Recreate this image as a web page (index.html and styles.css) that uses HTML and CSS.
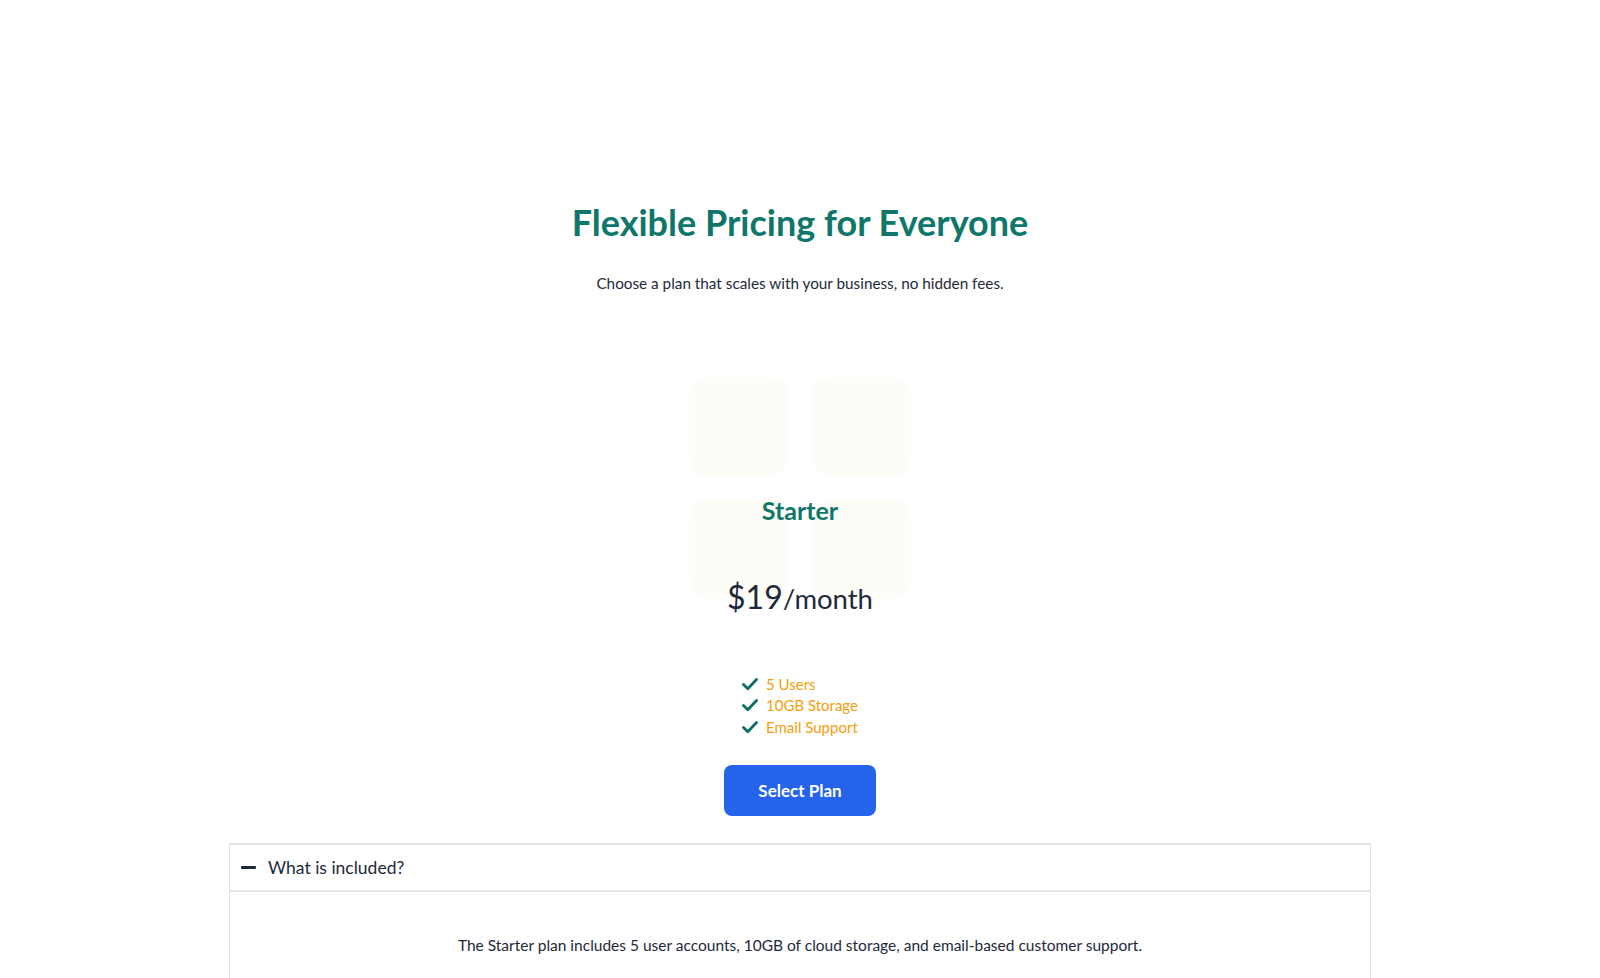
FILE: index.html
```html
<!DOCTYPE html>
<html lang="en">
<head>
<meta charset="utf-8">
<title>Flexible Pricing for Everyone</title>
<link rel="stylesheet" href="styles.css">
</head>
<body>
<main class="page">
  <h1 class="title">Flexible Pricing for Everyone</h1>
  <p class="subtitle">Choose a plan that scales with your business, no hidden fees.</p>

  <section class="card">
    <div class="deco" aria-hidden="true">
      <span></span><span></span><span></span><span></span>
    </div>
    <h2 class="plan-name">Starter</h2>
    <div class="price"><span class="amount">$19</span><span class="period">/month</span></div>
    <ul class="features">
      <li><svg class="check" viewBox="0 0 16 14" width="16" height="14"><path d="M1.5 7.5 L5.8 11.8 L14.5 2.5" fill="none" stroke="#0f6e63" stroke-width="2.8" stroke-linecap="round" stroke-linejoin="round"/></svg><span>5 Users</span></li>
      <li><svg class="check" viewBox="0 0 16 14" width="16" height="14"><path d="M1.5 7.5 L5.8 11.8 L14.5 2.5" fill="none" stroke="#0f6e63" stroke-width="2.8" stroke-linecap="round" stroke-linejoin="round"/></svg><span>10GB Storage</span></li>
      <li><svg class="check" viewBox="0 0 16 14" width="16" height="14"><path d="M1.5 7.5 L5.8 11.8 L14.5 2.5" fill="none" stroke="#0f6e63" stroke-width="2.8" stroke-linecap="round" stroke-linejoin="round"/></svg><span>Email Support</span></li>
    </ul>
    <button class="select-btn" type="button">Select Plan</button>
  </section>

  <section class="accordion">
    <div class="acc-header">
      <span class="minus"></span>
      <span class="acc-title">What is included?</span>
    </div>
    <div class="acc-body">
      <p>The Starter plan includes 5 user accounts, 10GB of cloud storage, and email-based customer support.</p>
    </div>
  </section>
</main>
</body>
</html>
```

FILE: styles.css
```css
* { box-sizing: border-box; }

html, body {
  margin: 0;
  padding: 0;
  background: #ffffff;
}

body {
  font-family: "Lato", "Inter", "Noto Sans", sans-serif;
  color: #1e293b;
}

.page {
  display: flex;
  flex-direction: column;
  align-items: center;
  padding-top: 200px;
}

.title {
  margin: 0;
  font-size: 36px;
  line-height: 44px;
  font-weight: 700;
  color: #0f766a;
  letter-spacing: 0;
}

.subtitle {
  margin: 27px 0 0;
  font-size: 15.3px;
  line-height: 24px;
  color: #1e293b;
}

.card {
  position: relative;
  margin-top: 82px;
  padding-top: 118px;
  display: flex;
  flex-direction: column;
  align-items: center;
  width: 400px;
}

.deco {
  position: absolute;
  top: 0;
  left: 50%;
  transform: translateX(-50%);
  display: grid;
  grid-template-columns: 100px 100px;
  grid-auto-rows: 100px;
  gap: 22px;
  z-index: 0;
}

.deco span {
  background: #fdfcf6;
  border-radius: 22px;
}

.plan-name, .price, .features, .select-btn {
  position: relative;
  z-index: 1;
}

.plan-name {
  margin: 0;
  font-size: 25px;
  line-height: 30px;
  font-weight: 700;
  color: #0f766a;
}

.price {
  margin-top: 50px;
  line-height: 44px;
  color: #1e293b;
  display: flex;
  align-items: baseline;
}

.amount {
  font-size: 32px;
}

.period {
  font-size: 27.5px;
}

.features {
  list-style: none;
  margin: 52px 0 0;
  padding: 0;
  display: flex;
  flex-direction: column;
}

.features li {
  display: flex;
  align-items: center;
  gap: 8px;
  height: 21.5px;
  font-size: 15px;
  color: #f59e0b;
}

.check {
  display: block;
  flex: none;
}

.select-btn {
  margin-top: 27px;
  width: 152px;
  height: 51px;
  border: none;
  border-radius: 8px;
  background: #2563eb;
  color: #ffffff;
  font-family: inherit;
  font-size: 17px;
  font-weight: 700;
  cursor: pointer;
}

.accordion {
  margin-top: 27px;
  width: 1142px;
  border: 1px solid #e2e4e8;
  border-top-width: 2px;
  border-bottom: none;
}

.acc-header {
  display: flex;
  align-items: center;
  gap: 12px;
  height: 47px;
  padding-left: 11px;
  border-bottom: 2px solid #e2e4e8;
}

.minus {
  display: block;
  width: 15px;
  height: 3px;
  background: #1e293b;
  border-radius: 1px;
}

.acc-title {
  font-size: 17.5px;
  color: #1e293b;
}

.acc-body {
  padding: 41px 24px 40px;
  text-align: center;
}

.acc-body p {
  margin: 0;
  font-size: 15.5px;
  line-height: 24px;
  color: #1e293b;
}
```
